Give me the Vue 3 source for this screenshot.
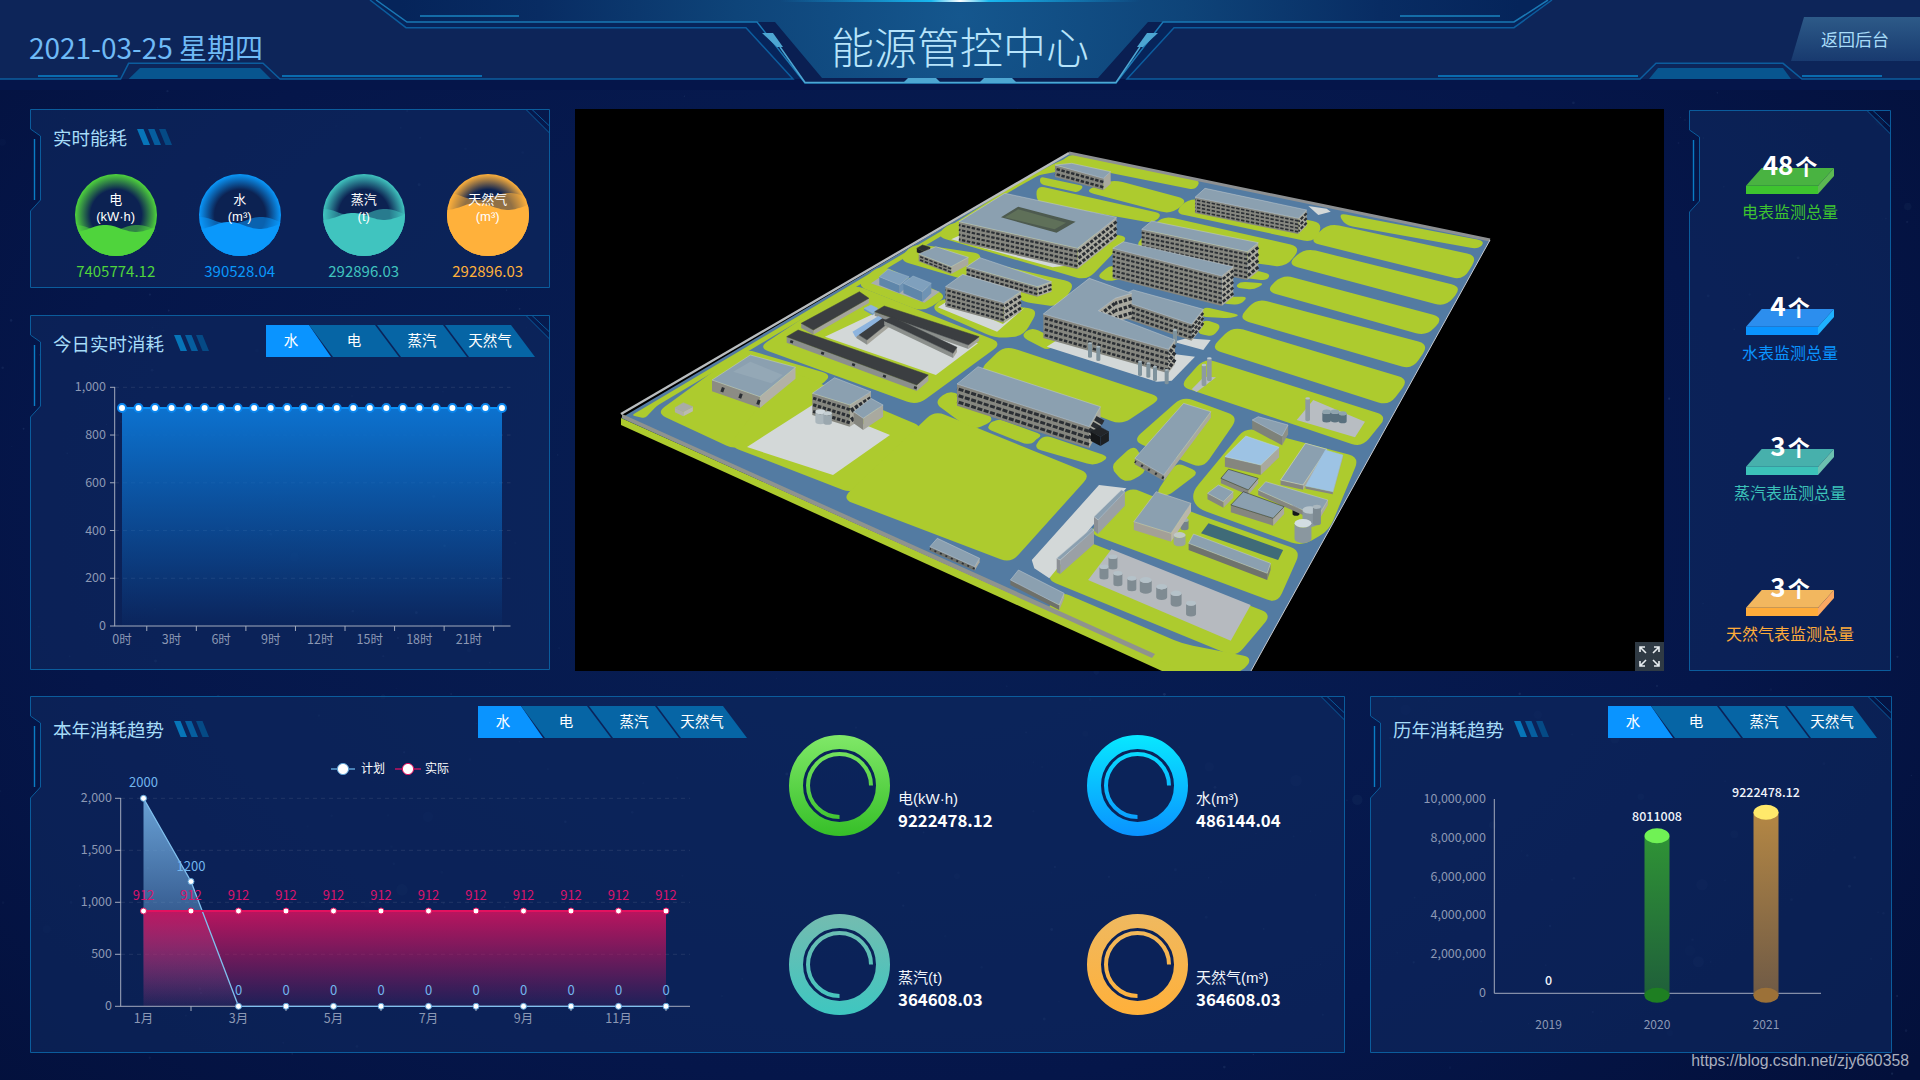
<template>
  <div class="screen">
    <svg class="stars" width="1920" height="1080">
      <circle v-for="(s, i) in stars" :key="i" :cx="s.x" :cy="s.y" :r="s.r" fill="#9fc4f0" :opacity="s.o" />
    </svg>

    <header class="header">
      <svg class="header-art" width="1920" height="90" viewBox="0 0 1920 90">
        <defs>
          <radialGradient id="hdMid" gradientUnits="userSpaceOnUse" cx="960" cy="10" r="560" gradientTransform="translate(0 6) scale(1 .99)">
            <stop offset="0" stop-color="#15578e" />
            <stop offset=".4" stop-color="#0e4479" />
            <stop offset=".75" stop-color="#082c63" />
            <stop offset="1" stop-color="#05245a" />
          </radialGradient>
          <linearGradient id="hdGlow" x1="0" x2="1" y1="0" y2="0">
            <stop offset="0" stop-color="#10a0e0" stop-opacity="0" />
            <stop offset=".42" stop-color="#18b8f0" />
            <stop offset=".5" stop-color="#ffffff" />
            <stop offset=".58" stop-color="#18b8f0" />
            <stop offset="1" stop-color="#10a0e0" stop-opacity="0" />
          </linearGradient>
        </defs>
        <path d="M0 0H1920V79H0Z" fill="#0d2559" />
        <path d="M370 0L406 27.7H746L793 79H1127L1174 27.7H1514L1552 0Z" fill="#07245a" />
        <path d="M376 0L407 22H757L805 83H1116L1163 22H1514L1548 0Z" fill="url(#hdMid)" />
        <path d="M757 22H775L822 78H1098L1148 22H1163L1116 83H805Z" fill="#0a1f52" />
        <path d="M0 79H801L805 83H1116L1120 79H1920V90H0Z" fill="#05154a" />

        <g fill="none" stroke="#0c5d9e" stroke-width="1.5">
          <path d="M0 79H120.6L128.6 63.3H263L280 79H793L746 27.7H406L370 0" />
          <path d="M1920 79H1802L1783 63.3H1656L1640 79H1127L1174 27.7H1514L1552 0" />
        </g>
        <path d="M376 0L407 22H757L805 83H1116L1163 22H1514L1548 0" fill="none" stroke="#1a78b4" stroke-width="1.5" />
        <g fill="#08558f">
          <path d="M128.6 79L140 68H260L271 79Z" />
          <path d="M1649 79L1658 68H1783L1791 79Z" />
        </g>
        <g stroke="#0a6cae" stroke-width="2">
          <path d="M38 76H117.6M282 76H482M1438 76H1638M1802 76H1882" />
          <path d="M420 16H519M1400 16H1500" stroke="#1a84c0" stroke-width="1.5" />
        </g>
        <g fill="#4da6d2">
          <path d="M903 83L908 78H936L941 83Z" />
          <path d="M979 83L984 78H1012L1017 83Z" />
          <path d="M762 33H773L783 47H777Z" />
          <path d="M1158 33H1147L1137 47H1143Z" />
        </g>
        <path d="M780 47L805 82.5H1116L1140 47" fill="none" stroke="#4da6d2" stroke-width="1.5" />
        <rect x="780" y="0" width="360" height="2" fill="url(#hdGlow)" />
      </svg>
      <div class="header-row">
        <div class="date">2021-03-25 星期四</div>
        <h1 class="title">能源管控中心</h1>
        <div class="back-wrap"><a class="back">返回后台</a></div>
      </div>
    </header>

    <main class="main">
      <div class="left-col">
        <section class="panel panel-live">
          <svg class="frame" width="520" height="179"><path class="frame-fill" :d="fill(520, 179)" /><path class="frame-line" :d="line(520, 179)" /><path class="frame-glow" d="M4.5 30V91" /></svg>
          <div class="panel-head"><h2 class="panel-title">实时能耗<i class="bars"><b></b><b></b><b></b></i></h2></div>
          <div class="orbs">
            <div v-for="o in orbs" :key="o.id" class="orb-cell">
              <div class="orb">
                <svg width="82" height="82">
                  <defs>
                    <radialGradient :id="'g' + o.id" cx=".5" cy=".5" r=".5">
                      <stop offset=".62" stop-color="#0c2252" />
                      <stop offset="1" :stop-color="o.color" />
                    </radialGradient>
                    <clipPath :id="'c' + o.id"><circle cx="41" cy="41" r="41" /></clipPath>
                  </defs>
                  <circle cx="41" cy="41" r="41" :fill="'url(#g' + o.id + ')'" />
                  <g :clip-path="'url(#c' + o.id + ')'" :fill="o.color">
                    <path :d="wave(o.back, 0)" opacity=".55" />
                    <path :d="wave(o.front, 30)" />
                  </g>
                </svg>
                <div class="orb-text">{{ o.name }}<br />{{ o.unit }}</div>
              </div>
              <div class="orb-value" :style="{ color: o.color }">{{ o.value }}</div>
            </div>
          </div>
        </section>

        <section class="panel panel-today">
          <svg class="frame" width="520" height="355"><path class="frame-fill" :d="fill(520, 355)" /><path class="frame-line" :d="line(520, 355)" /><path class="frame-glow" d="M4.5 30V91" /></svg>
          <div class="panel-head">
            <h2 class="panel-title">今日实时消耗<i class="bars"><b></b><b></b><b></b></i></h2>
            <div class="tabs"><span v-for="(t, i) in tabs" :key="t" class="tab" :class="{ on: i === 0 }">{{ t }}</span></div>
          </div>
          <svg class="chart" width="520" height="295" viewBox="30 375 520 295">
            <defs>
              <linearGradient id="todayArea" x1="0" x2="0" y1="0" y2="1">
                <stop offset="0" stop-color="#0c72cf" />
                <stop offset="1" stop-color="#0c72cf" stop-opacity=".03" />
              </linearGradient>
            </defs>
            <g v-for="t in todayY" :key="t.label">
              <line v-if="t.v" x1="115" :x2="510.5" :y1="t.y" :y2="t.y" class="grid" />
              <line x1="110" x2="115" :y1="t.y" :y2="t.y" class="axis" />
              <text x="106" :y="t.y + 4" text-anchor="end" class="tick">{{ t.label }}</text>
            </g>
            <rect x="122" y="408" width="380" height="218" fill="url(#todayArea)" />
            <path d="M122 408H502" stroke="#0a90f5" stroke-width="2" />
            <path d="M114.7 387V626H510.5" class="axis" fill="none" />
            <line v-for="x in todayTicks" :key="x" :x1="x" :x2="x" y1="626" y2="631" class="axis" />
            <g v-for="x in todayPts" :key="x">
              <circle :cx="x" cy="408" r="4" fill="#fff" stroke="#0a86ee" stroke-width="2" />
            </g>
            <text v-for="l in todayX" :key="l.t" :x="l.x" y="644" text-anchor="middle" class="tick">{{ l.t }}</text>
          </svg>
        </section>
      </div>

      <section class="scene">
        <svg width="1089" height="562">
          <path v-for="(p, i) in scene" :key="i" :d="p.d" :fill="p.fill || 'none'" :stroke="p.stroke" :stroke-width="p.sw" :stroke-dasharray="p.dash" />
        </svg>
        <button class="full" aria-label="全屏">
          <svg width="29" height="29" viewBox="0 0 29 29" fill="none" stroke="#e8edf0" stroke-width="1.6">
            <path d="M5 10V5H10M5 5L11 11M24 10V5H19M24 5L18 11M5 19V24H10M5 24L11 18M24 19V24H19M24 24L18 18" />
          </svg>
        </button>
      </section>

      <section class="panel panel-stats">
        <svg class="frame" width="202" height="561"><path class="frame-fill" :d="fill(202, 561)" /><path class="frame-line" :d="line(202, 561)" /><path class="frame-glow" d="M4.5 30V91" /></svg>
        <div v-for="s in stats" :key="s.label" class="stat">
          <div class="stat-num">{{ s.num }}<span>个</span></div>
          <svg class="stat-box" width="88" height="26">
            <path d="M0 17.7L15.7 0H88L72 17.7Z" :fill="s.top" />
            <path d="M0 17.7H72V26H0Z" :fill="s.color" />
            <path d="M72 17.7L88 0V8L72 26Z" :fill="s.side" />
          </svg>
          <div class="stat-label" :style="{ color: s.color }">{{ s.label }}</div>
        </div>
      </section>
    </main>

    <div class="bottom">
      <section class="panel panel-year">
        <svg class="frame" width="1315" height="357"><path class="frame-fill" :d="fill(1315, 357)" /><path class="frame-line" :d="line(1315, 357)" /><path class="frame-glow" d="M4.5 30V91" /></svg>
        <div class="year-left">
          <div class="panel-head low">
            <h2 class="panel-title">本年消耗趋势<i class="bars"><b></b><b></b><b></b></i></h2>
            <div class="tabs"><span v-for="(t, i) in tabs" :key="t" class="tab" :class="{ on: i === 0 }">{{ t }}</span></div>
          </div>
          <svg class="chart" width="730" height="297" viewBox="30 756 730 297">
            <defs>
              <linearGradient id="planArea" gradientUnits="userSpaceOnUse" x1="0" x2="0" y1="798" y2="1006">
                <stop offset="0" stop-color="#6ea8dc" stop-opacity=".95" />
                <stop offset="1" stop-color="#6ea8dc" stop-opacity=".03" />
              </linearGradient>
              <linearGradient id="realArea" x1="0" x2="0" y1="0" y2="1">
                <stop offset="0" stop-color="#c2145f" stop-opacity=".95" />
                <stop offset="1" stop-color="#c2145f" stop-opacity=".1" />
              </linearGradient>
            </defs>
            <g v-for="t in yearY" :key="t.label">
              <line v-if="t.v" x1="121" x2="690" :y1="t.y" :y2="t.y" class="grid" />
              <line x1="115" x2="121" :y1="t.y" :y2="t.y" class="axis" />
              <text x="112" :y="t.y + 4" text-anchor="end" class="tick">{{ t.label }}</text>
            </g>
            <path :d="planArea" fill="url(#planArea)" />
            <rect x="143.5" y="911" width="522.5" height="95.3" fill="url(#realArea)" />
            <path d="M120.7 798V1006.3H690" class="axis" fill="none" />
            <line v-for="(m, i) in yearPts" v-show="i % 2" :key="m.x" :x1="m.x" :x2="m.x" y1="1006" y2="1011" class="axis" />
            <path :d="planLine" fill="none" stroke="#80c0ee" stroke-width="1.3" />
            <path d="M143.5 911H666" stroke="#e3115f" stroke-width="2" />
            <g v-for="m in yearPts" :key="'p' + m.x">
              <circle :cx="m.x" :cy="m.planY" r="3" fill="#fff" stroke="#5ea2d6" />
              <circle :cx="m.x" cy="911" r="3" fill="#fff" stroke="#e3115f" />
              <text :x="m.x" :y="m.planY - 11" text-anchor="middle" class="plan-label">{{ m.plan }}</text>
              <text :x="m.x" y="900" text-anchor="middle" class="real-label">912</text>
              <text v-if="m.month" :x="m.x" y="1023" text-anchor="middle" class="tick">{{ m.month }}</text>
            </g>
            <path d="M331 769H355" stroke="#5ea2d6" stroke-width="1.5" />
            <circle cx="343" cy="769" r="5.6" fill="#fff" stroke="#5ea2d6" />
            <text x="361" y="773" class="legend">计划</text>
            <path d="M395 769H421" stroke="#c2145f" stroke-width="1.5" />
            <circle cx="408" cy="769" r="5.6" fill="#fff" stroke="#e3115f" />
            <text x="425" y="773" class="legend">实际</text>
          </svg>
        </div>
        <div class="metrics">
          <div v-for="m in metrics" :key="m.id" class="metric">
            <svg width="101" height="101">
              <defs>
                <linearGradient :id="'m' + m.id" gradientUnits="userSpaceOnUse" x1="0" x2="0" y1="0" y2="101">
                  <stop offset="0" :stop-color="m.from" />
                  <stop offset="1" :stop-color="m.to" />
                </linearGradient>
              </defs>
              <circle cx="50.5" cy="50.5" r="43.5" fill="none" :stroke="'url(#m' + m.id + ')'" stroke-width="14" />
              <path d="M50.5 82A31.5 31.5 0 1 1 82 50.5" fill="none" :stroke="'url(#m' + m.id + ')'" stroke-width="4" />
            </svg>
            <div class="metric-text">
              <div class="metric-name">{{ m.name }}</div>
              <div class="metric-value">{{ m.value }}</div>
            </div>
          </div>
        </div>
      </section>

      <section class="panel panel-history">
        <svg class="frame" width="522" height="357"><path class="frame-fill" :d="fill(522, 357)" /><path class="frame-line" :d="line(522, 357)" /><path class="frame-glow" d="M4.5 30V91" /></svg>
        <div class="panel-head low">
          <h2 class="panel-title">历年消耗趋势<i class="bars"><b></b><b></b><b></b></i></h2>
          <div class="tabs"><span v-for="(t, i) in tabs" :key="t" class="tab" :class="{ on: i === 0 }">{{ t }}</span></div>
        </div>
        <svg class="chart" width="522" height="297" viewBox="1370 756 522 297">
          <defs>
            <linearGradient id="barG" x1="0" x2="0" y1="0" y2="1">
              <stop offset="0" stop-color="#2f9336" />
              <stop offset="1" stop-color="#1f5f3a" />
            </linearGradient>
            <linearGradient id="barO" x1="0" x2="0" y1="0" y2="1">
              <stop offset="0" stop-color="#b48744" />
              <stop offset="1" stop-color="#6f5a46" />
            </linearGradient>
          </defs>
          <text v-for="(l, i) in historyY" :key="l" x="1486" :y="803 + i * 38.8" text-anchor="end" class="tick">{{ l }}</text>
          <path d="M1494.3 799V993.3H1821" class="axis" fill="none" />
          <rect x="1644.5" y="836" width="25" height="160" fill="url(#barG)" />
          <ellipse cx="1657" cy="995.3" rx="12.5" ry="7.5" fill="#1e7f22" />
          <ellipse cx="1657" cy="835.7" rx="12.5" ry="7.5" fill="#70f255" />
          <rect x="1753.5" y="812" width="25" height="184" fill="url(#barO)" />
          <ellipse cx="1766" cy="995.3" rx="12.5" ry="7.5" fill="#9c7138" />
          <ellipse cx="1766" cy="812.3" rx="12.5" ry="7.5" fill="#ffe96b" />
          <text x="1548.6" y="985" text-anchor="middle" class="bar-label">0</text>
          <text x="1657" y="821" text-anchor="middle" class="bar-label">8011008</text>
          <text x="1766" y="797" text-anchor="middle" class="bar-label">9222478.12</text>
          <text x="1548.6" y="1029" text-anchor="middle" class="tick small">2019</text>
          <text x="1657" y="1029" text-anchor="middle" class="tick small">2020</text>
          <text x="1766" y="1029" text-anchor="middle" class="tick small">2021</text>
        </svg>
      </section>
    </div>

    <div class="watermark">https://blog.csdn.net/zjy660358</div>
  </div>
</template>

<script setup>
const tabs = ['水', '电', '蒸汽', '天然气']

// panel outline: notch on the left, clipped corner on the right
const outline = 'V102L10.5 91V27L.5 20Z'
const fill = (w, h) => `M.5 .5H${w - 24}L${w - .5} 24V${h - .5}H.5${outline}`
const line = (w, h) => `M.5 .5H${w - .5}V${h - .5}H.5${outline}M${w - 24} .5L${w - .5} 24M${w - 18} .5L${w - .5} 17`

let seed = 7
const rnd = () => (seed = (seed * 16807) % 2147483647) / 2147483647
const stars = Array.from({ length: 420 }, () => {
  const big = rnd() > .88
  return {
    x: rnd() * 1920,
    y: rnd() * 1080,
    r: big ? 2 + rnd() * 4 : .5 + rnd(),
    o: big ? .02 + rnd() * .03 : .03 + rnd() * .09,
  }
})

const orbs = [
  { id: 'e', name: '电', unit: '(kW·h)', value: '7405774.12', color: '#4fd43c', front: 51, back: 51 },
  { id: 'w', name: '水', unit: '(m³)', value: '390528.04', color: '#0a98fb', front: 48, back: 43 },
  { id: 's', name: '蒸汽', unit: '(t)', value: '292896.03', color: '#40c4bf', front: 39, back: 35 },
  { id: 'g', name: '天然气', unit: '(m³)', value: '292896.03', color: '#ffb13b', front: 29, back: 19 },
]

function wave(level, crest) {
  let d = `M0 82`
  for (let x = 0; x <= 82; x += 2) {
    const y = level + 3.5 * (1 - Math.cos((2 * Math.PI * (x - crest)) / 62))
    d += `L${x} ${y.toFixed(1)}`
  }
  return d + 'L82 82Z'
}

const todayY = [0, 200, 400, 600, 800, 1000].map((v) => ({
  v,
  y: 626 - v * 0.2387,
  label: v.toLocaleString('en-US'),
}))
const todayPts = Array.from({ length: 24 }, (_, i) => 122 + i * 16.52)
const todayTicks = Array.from({ length: 8 }, (_, i) => 122 + 16.52 * (1.5 + i * 3))
const todayX = Array.from({ length: 8 }, (_, i) => ({ x: 122 + i * 49.56, t: i * 3 + '时' }))

const yearY = [0, 500, 1000, 1500, 2000].map((v) => ({
  v,
  y: 1006.3 - v * 0.104,
  label: v.toLocaleString('en-US'),
}))
const planVals = [2000, 1200, 0, 0, 0, 0, 0, 0, 0, 0, 0, 0]
const yearPts = planVals.map((plan, i) => ({
  x: 143.5 + i * 47.5,
  plan,
  planY: 1006.3 - plan * 0.104,
  month: i % 2 ? '' : i + 1 + '月',
}))
const planLine = 'M' + yearPts.map((p) => `${p.x} ${p.planY}`).join('L')
const planArea = planLine + 'L666 1006.3H143.5Z'

const historyY = ['10,000,000', '8,000,000', '6,000,000', '4,000,000', '2,000,000', '0']

const metrics = [
  { id: 'e', name: '电(kW·h)', value: '9222478.12', from: '#80e868', to: '#36bf28' },
  { id: 'w', name: '水(m³)', value: '486144.04', from: '#08e8ff', to: '#0a92ff' },
  { id: 's', name: '蒸汽(t)', value: '364608.03', from: '#74bcb0', to: '#3ec6c0' },
  { id: 'g', name: '天然气(m³)', value: '364608.03', from: '#efb960', to: '#ffb03a' },
]

const stats = [
  { num: 48, label: '电表监测总量', color: '#3ec42f', top: '#49b341', side: '#5cb852' },
  { num: 4, label: '水表监测总量', color: '#0a94ff', top: '#2c8eee', side: '#1fb1ff' },
  { num: 3, label: '蒸汽表监测总量', color: '#3cc2b9', top: '#47b0ac', side: '#6cc0b0' },
  { num: 3, label: '天然气表监测总量', color: '#ffac3a', top: '#f2b75f', side: '#fba862' },
]

// --- plant scene. Coordinates are read in three reference crops, then moved to scene space.
const FRAMES = {
  A: [580, 110, 2.613, 3],
  B: [900, 360, 2.01, 3],
  C: [1040, 150, 3, 3],
  F: [0, 0, 1, 1],
}
const at = (f, flat) => {
  const [ox, oy, sx, sy] = FRAMES[f]
  const out = []
  for (let i = 0; i < flat.length; i += 2) out.push([ox + flat[i] / sx - 575, oy + flat[i + 1] / sy - 109])
  return out
}
const polyD = (pts) => 'M' + pts.map((p) => `${p[0].toFixed(1)} ${p[1].toFixed(1)}`).join('L') + 'Z'
function roundD(pts, r) {
  let d = ''
  pts.forEach((p, i) => {
    const a = pts[(i + pts.length - 1) % pts.length]
    const b = pts[(i + 1) % pts.length]
    const cut = (q) => {
      const len = Math.hypot(q[0] - p[0], q[1] - p[1])
      const k = Math.min(r, len / 2) / len
      return [p[0] + (q[0] - p[0]) * k, p[1] + (q[1] - p[1]) * k]
    }
    const s = cut(a)
    const e = cut(b)
    d += `${i ? 'L' : 'M'}${s[0].toFixed(1)} ${s[1].toFixed(1)}Q${p[0].toFixed(1)} ${p[1].toFixed(1)} ${e[0].toFixed(1)} ${e[1].toFixed(1)}`
  })
  return d + 'Z'
}
// corners were read on the rounded outline, so push them back out
function grow(pts, by) {
  const cx = pts.reduce((s, p) => s + p[0], 0) / pts.length
  const cy = pts.reduce((s, p) => s + p[1], 0) / pts.length
  return pts.map((p) => {
    const len = Math.hypot(p[0] - cx, p[1] - cy) || 1
    return [p[0] + ((p[0] - cx) / len) * by, p[1] + ((p[1] - cy) / len) * by]
  })
}

const GRASS = '#adcb2e'
const ROAD = '#537ba2'
const CONCRETE = '#d3d8d8'
const ROOF = '#8ba0b0'
const BLUE_ROOF = '#9dc3e4'
const DARK_ROOF = '#3b3e41'

const grassBlocks = [
  ['C', [905, 192, 1325, 272, 1305, 295, 925, 226], 8],
  ['C', [885, 228, 1292, 316, 1250, 382, 828, 278], 16],
  ['C', [815, 302, 1245, 408, 1198, 462, 762, 346], 16],
  ['C', [748, 382, 1190, 500, 1140, 550, 697, 426], 16],
  ['C', [672, 455, 1143, 580, 1095, 648, 618, 510], 18],
  ['C', [600, 540, 1083, 685, 1025, 756, 535, 600], 18],
  ['C', [515, 636, 1018, 795, 945, 880, 442, 712], 18],
  ['C', [90, 12, 482, 93, 465, 120, 60, 38], 6],
  ['C', [232, 98, 428, 148, 378, 184, 150, 125], 14],
  ['C', [0, 80, 132, 108, 115, 128, 0, 102], 4],
  ['C', [0, 110, 358, 190, 330, 216, 0, 158], 8],
  ['C', [465, 150, 832, 218, 805, 272, 420, 190], 14],
  ['C', [385, 205, 765, 290, 720, 346, 300, 290], 14],
  ['C', [640, 360, 692, 372, 680, 392, 600, 382], 6],
  ['C', [600, 395, 675, 400, 640, 420, 585, 412], 6],
  ['C', [560, 440, 625, 440, 600, 465, 545, 460], 6],
  ['C', [490, 470, 602, 495, 570, 505, 480, 500], 6],
  ['C', [490, 508, 545, 525, 520, 560, 470, 550], 6],
  ['C', [210, 345, 310, 370, 205, 395, 170, 380], 6],
  ['C', [135, 345, 170, 350, 135, 390, 80, 350], 6],
  ['C', [0, 380, 90, 395, 55, 460, 0, 435], 6],
  ['A', [1125, 718, 1503, 860, 1400, 932, 1060, 785], 16],
  ['A', [135, 916, 985, 335, 1135, 225, 1240, 160, 1275, 143, 1305, 172, 1200, 195, 1115, 250, 985, 350, 200, 888, 170, 925], 3],
  ['A', [430, 735, 645, 800, 410, 1002, 215, 905], 14],
  ['A', [725, 545, 1082, 700, 870, 865, 487, 712], 18],
  ['F', [790, 375, 918, 428, 850, 488, 735, 445], 14],
  ['A', [795, 478, 945, 555, 885, 592, 738, 528], 14],
  ['A', [885, 410, 1040, 435, 1000, 500, 848, 450], 14],
  ['A', [985, 340, 1420, 380, 1310, 502, 945, 380], 14],
  ['A', [960, 570, 1185, 600, 1145, 672, 1080, 670, 930, 600], 12],
  ['A', [1010, 445, 1282, 520, 1240, 582, 1160, 560], 12],
  ['A', [1185, 660, 1240, 690, 1220, 715, 1160, 680], 8],
  ['A', [975, 850, 1075, 925, 1020, 950, 935, 880], 10],
  ['A', [1090, 925, 1210, 975, 1170, 1005, 1060, 955], 6],
  ['F', [938, 418, 1083, 475, 1007, 556, 850, 498], 18],
  ['B', [110, 105, 180, 170, 140, 195, 80, 130], 8],
  ['B', [185, 180, 280, 225, 265, 255, 175, 205], 6],
  ['B', [295, 230, 415, 290, 385, 312, 275, 265], 8],
  ['B', [570, 125, 670, 175, 605, 310, 478, 240], 12],
  ['B', [470, 265, 490, 330, 455, 358, 430, 320], 10],
  ['B', [555, 318, 595, 340, 540, 400, 520, 395], 8],
  ['B', [700, 222, 910, 300, 850, 500, 800, 540, 610, 440, 600, 400], 16],
  ['B', [470, 390, 600, 480, 795, 570, 750, 720, 390, 520], 12],
  ['B', [385, 555, 735, 760, 665, 880, 305, 660], 14],
  ['B', [330, 700, 560, 850, 700, 890, 680, 932, 570, 932, 300, 760], 10],
]

const base = []
const items = []

function poly(f, flat, color, z) {
  const pts = at(f, flat)
  items.push({ z: z ?? Math.max(...pts.map((p) => p[1])), d: polyD(pts), fill: color })
}

function box(f, flat, h, opts = {}) {
  const pts = at(f, flat)
  const H = h / FRAMES[f][3]
  const z = opts.z ?? Math.max(...pts.map((p) => p[1]))
  const rows = opts.rows ?? 0
  pts.forEach((p, i) => {
    const q = pts[(i + 1) % pts.length]
    const dx = q[0] - p[0]
    const dy = q[1] - p[1]
    if (dx >= 0) return
    const lit = dy > 0
    const wall = polyD([p, q, [q[0], q[1] + H], [p[0], p[1] + H]])
    items.push({ z, d: wall, fill: lit ? opts.side || '#a9a99f' : opts.front || '#85867f' })
    if (rows && (!lit || opts.sideRows)) {
      const count = lit ? opts.sideRows : rows
      for (let k = 0; k < count; k++) {
        const off = (H * (k + 0.7)) / (count + 0.3)
        items.push({
          z,
          d: `M${p[0].toFixed(1)} ${(p[1] + off).toFixed(1)}L${q[0].toFixed(1)} ${(q[1] + off).toFixed(1)}`,
          stroke: '#2a2e33',
          sw: Math.max(1, (H / count) * 0.42),
          dash: opts.dash || '3.4 1.6',
        })
      }
    }
  })
  items.push({ z, d: polyD(pts), fill: opts.roof || ROOF, stroke: opts.rim || '#c4ccd0', sw: 0.5 })
}

function cyl(f, x, y, w, h, color, top) {
  const [[cx, cy]] = at(f, [x, y])
  const r = w / 2 / FRAMES[f][2]
  const H = h / FRAMES[f][3]
  const ry = r * 0.5
  const z = cy + H
  items.push({ z, d: `M${cx - r} ${cy}A${r} ${ry} 0 0 0 ${cx + r} ${cy}V${cy + H}A${r} ${ry} 0 0 1 ${cx - r} ${cy + H}Z`, fill: color })
  items.push({ z, d: `M${cx - r} ${cy}A${r} ${ry} 0 1 1 ${cx + r} ${cy}A${r} ${ry} 0 1 1 ${cx - r} ${cy}Z`, fill: top || '#b9c6cf' })
}

// flat ground pieces
poly('C', [20, 590, 55, 568, 465, 620, 395, 692, 350, 695], CONCRETE, 0)
poly('C', [400, 575, 440, 565, 512, 570, 490, 600], CONCRETE, 0)
poly('C', [770, 810, 820, 750, 975, 815, 945, 862], '#b8bdc2', 0)
poly('C', [455, 718, 492, 680, 528, 682, 470, 726], '#b8bdc2', 0)
poly('F', [747, 447, 814, 404, 890, 435, 833, 475], CONCRETE, 0)
poly('A', [640, 680, 770, 610, 1040, 700, 930, 795], CONCRETE, 0)
poly('A', [935, 592, 962, 572, 1105, 642, 1165, 590, 1090, 665], CONCRETE, 0)
poly('A', [970, 388, 1000, 372, 1310, 462, 1235, 472], CONCRETE, 0)
poly('B', [265, 600, 400, 375, 455, 385, 385, 500, 300, 655, 270, 625], CONCRETE, 0)
poly('B', [378, 660, 425, 568, 705, 735, 665, 842], '#b6babf', 0)
poly('B', [605, 520, 620, 490, 770, 570, 760, 600], '#3f6b78', 0)
poly('A', [760, 520, 800, 490, 940, 545, 900, 578], '#a8adb0', 0)
poly('C', [805, 168, 860, 176, 872, 185, 835, 195], CONCRETE, 0)

// buildings
box('C', [45, 45, 95, 40, 212, 65, 190, 85], 36, { rows: 2 })
box('C', [465, 142, 495, 115, 800, 180, 775, 205], 47, { rows: 4, sideRows: 3 })
box('C', [305, 238, 335, 213, 655, 278, 622, 305], 85, { rows: 6, sideRows: 4 })
box('C', [218, 295, 250, 275, 580, 350, 545, 378], 90, { rows: 6, sideRows: 5 })
box('C', [225, 445, 280, 420, 490, 478, 455, 522], 50, { rows: 3, sideRows: 3 })
box('C', [10, 492, 148, 385, 275, 430, 225, 445, 175, 482, 405, 570, 385, 598], 72, { rows: 4, sideRows: 3 })
box('A', [990, 335, 1110, 250, 1402, 322, 1300, 415], 62, { rows: 4, sideRows: 3 })
poly('A', [1100, 322, 1145, 290, 1295, 335, 1245, 368], '#4d5a4f', 420)
poly('A', [1110, 322, 1145, 298, 1270, 338, 1240, 358], '#5f7059', 420)
box('A', [885, 432, 930, 410, 1015, 442, 970, 470], 22, { rows: 2 })
box('A', [880, 415, 895, 405, 915, 412, 900, 425], 12, { roof: '#2c2f33', front: '#1c1f22', side: '#26292c', rim: '#2c2f33' })
box('A', [1010, 470, 1045, 443, 1232, 515, 1195, 530], 30, { rows: 2, sideRows: 2 })
box('A', [955, 530, 1000, 493, 1152, 545, 1107, 578], 60, { rows: 4, sideRows: 3 })
const tank = { roof: '#7fa0bd', front: '#5f86aa', side: '#6f93b4', rim: '#9db6cc' }
box('A', [782, 500, 805, 478, 860, 500, 835, 525], 25, tank)
box('A', [845, 520, 870, 498, 918, 520, 895, 545], 30, tank)
const hall = { roof: DARK_ROOF, rim: DARK_ROOF, front: '#8b8f8c', side: '#a4a49c' }
box('A', [578, 640, 730, 545, 755, 565, 610, 660], 14, hall)
box('A', [540, 680, 570, 660, 910, 795, 880, 825], 18, { ...hall, rows: 1, dash: '3 30' })
box('A', [770, 605, 795, 588, 1043, 680, 1015, 705], 12, hall)
box('A', [795, 632, 815, 620, 985, 712, 975, 730], 14, hall)
box('A', [722, 670, 790, 615, 815, 630, 750, 690], 14, hall)
poly('A', [712, 665, 780, 618, 790, 625, 720, 682], '#8db4de', 640)
box('A', [742, 595, 760, 585, 778, 595, 765, 610], 6, { roof: '#8db4de', rim: '#8db4de', front: '#6f95bd', side: '#7aa0c8' })
box('A', [345, 810, 445, 735, 563, 772, 470, 860], 34, { rows: 1, dash: '3 16', front: '#8c8c84', side: '#b2b1a7' })
poly('A', [400, 785, 445, 755, 530, 795, 500, 820], '#94a8b6', 900)
box('A', [248, 893, 270, 878, 295, 890, 270, 905], 14, { roof: '#a9aca6', rim: '#a9aca6', front: '#b0b0a8', side: '#bbbbb2' })
box('A', [607, 850, 665, 803, 760, 845, 705, 885], 65, { rows: 3, sideRows: 2 })
box('A', [715, 905, 760, 865, 792, 885, 740, 925], 35, { sideRows: 0 })
cyl('A', 628, 905, 26, 30, '#aab6bc', '#cfd8dc')
cyl('A', 647, 910, 22, 28, '#9aa7ae', '#c4ced2')
box('A', [985, 822, 1040, 770, 1360, 890, 1330, 950], 65, { rows: 3, sideRows: 1, dash: '5 1.6' })
box('A', [1335, 965, 1358, 950, 1382, 965, 1360, 980], 28, { roof: '#23262a', front: '#15171a', side: '#1d2023', rim: '#23262a', z: 410 })
box('B', [472, 295, 570, 130, 625, 155, 530, 345], 18, { rows: 1, dash: '2 6' })
box('B', [708, 180, 720, 170, 780, 195, 768, 228], 28, { front: '#7e827a', side: '#8d9087' })
box('B', [653, 290, 695, 228, 762, 262, 725, 315], 30, { roof: BLUE_ROOF, rim: '#bdd5ea' })
box('B', [765, 360, 815, 250, 858, 268, 810, 375], 14, { rim: '#dcdfdc' })
box('B', [815, 378, 855, 270, 890, 285, 870, 395], 8, { roof: BLUE_ROOF, rim: BLUE_ROOF })
box('B', [645, 355, 660, 328, 720, 355, 700, 390], 15, { rim: '#222' })
box('B', [618, 400, 640, 375, 670, 395, 650, 425], 18)
box('B', [665, 435, 690, 395, 772, 440, 750, 475], 22, { rim: '#222' })
box('B', [720, 390, 735, 365, 860, 420, 840, 470], 15)
box('B', [470, 485, 515, 395, 585, 430, 545, 520], 25, { rim: '#cfcabe', front: '#a3a097', side: '#bab6ab' })
box('B', [580, 550, 590, 522, 745, 610, 738, 640], 20, { front: '#6f736d', side: '#7e8279' })
box('B', [60, 560, 75, 535, 160, 595, 150, 620], 12, { front: '#6e706a', rows: 1, dash: '2 4' })
box('B', [222, 660, 238, 630, 330, 700, 320, 735], 15, { front: '#6e706a' })
box('B', [390, 470, 445, 390, 452, 395, 398, 480], 42, { front: '#8c9095', side: '#9aa0a5' })
box('B', [315, 595, 385, 505, 390, 510, 322, 600], 42, { front: '#8c9095', side: '#9aa0a5' })
cyl('B', 796, 420, 14, 42, '#15181b', '#2a2e33')
cyl('B', 824, 450, 30, 40, '#8a979f', '#b8c5cc')
cyl('B', 838, 440, 16, 50, '#7d8a92', '#aab7be')
cyl('B', 810, 490, 34, 46, '#8a979f', '#d3dde2')
cyl('B', 562, 525, 24, 25, '#98a29f', '#c0c9c6')
cyl('B', 572, 480, 16, 25, '#74818a', '#9fb0b8')
;[[428, 590, 18], [410, 620, 18], [438, 640, 18], [466, 655, 18], [494, 660, 24], [526, 680, 22], [555, 700, 22], [585, 730, 20]].forEach(([x, y, w]) =>
  cyl('B', x, y, w, 32, '#7f8b92', '#b5c2c9'),
)
cyl('C', 803, 745, 14, 65, '#8d9aa2', '#b6c2ca')
cyl('C', 492, 645, 14, 60, '#8d9aa2', '#b6c2ca')
cyl('C', 508, 625, 14, 65, '#8d9aa2', '#c2cdd4')
cyl('C', 860, 785, 26, 26, '#59707e', '#8fa4ae')
cyl('C', 885, 785, 26, 26, '#59707e', '#8fa4ae')
cyl('C', 908, 790, 24, 24, '#59707e', '#8fa4ae')
;[[150, 580], [175, 590], [300, 635], [325, 640], [345, 650], [380, 660], [405, 540]].forEach(([x, y]) => cyl('C', x, y, 12, 40, '#7e929c', '#aabac2'))

items.sort((a, b) => a.z - b.z)

// ground and edge rims
const ground = at('F', [1069, 153, 1490, 240, 1251, 671, 1184, 671, 621, 418])
base.push({ d: polyD(ground), fill: ROAD })
grassBlocks.forEach(([f, flat, r]) => base.push({ d: roundD(grow(at(f, flat), r > 6 ? r * 0.45 : 0), Math.min(r, 11)), fill: GRASS }))
base.push({ d: polyD(at('F', [621, 418, 1184, 671, 1162, 671, 621, 425])), fill: GRASS })
base.push({ d: polyD(at('F', [622, 414, 1155, 654, 1152, 658, 622, 418])), fill: '#8f938e' })
base.push({ d: `M${46} ${305}L${494} ${44}`, stroke: '#b9bdbf', sw: 2.4 })
base.push({ d: `M${494} ${44}L${915} ${131}`, stroke: '#8d9092', sw: 3 })
base.push({ d: `M${915} ${131}L${676} ${562}`, stroke: '#c6cad0', sw: 1 })

const scene = [...base, ...items]
</script>

<style>
html, body { margin: 0; background: #04123f; }
</style>

<style scoped>
.screen {
  position: relative;
  width: 1920px;
  height: 1080px;
  overflow: hidden;
  color: #fff;
  font-family: "Noto Sans CJK SC", "Liberation Sans", sans-serif;
  background: radial-gradient(ellipse 1300px 900px at 900px 500px, #082055 0%, #05164a 65%, #03103b 100%);
}
.stars { position: absolute; left: 0; top: 0; }

.header { position: relative; height: 109px; }
.header-art { position: absolute; left: 0; top: 0; }
.header-row {
  position: relative;
  display: grid;
  grid-template-columns: 1fr auto 1fr;
  align-items: start;
}
.date {
  padding: 28px 0 0 29px;
  font-size: 28px;
  font-weight: 400;
  line-height: 38px;
  color: #6fbaf6;
}
.title {
  margin: 15px 0 0;
  font-size: 43px;
  font-weight: 300;
  line-height: 60px;
  color: #b7e4fb;
}
.back-wrap { display: flex; justify-content: flex-end; padding-top: 17px; }
.back {
  width: 129px;
  height: 44px;
  padding-left: 30px;
  box-sizing: border-box;
  font-size: 17px;
  font-weight: 400;
  line-height: 44px;
  color: #a8dcf8;
  background: linear-gradient(#2d5a88, #183a6f);
  clip-path: polygon(13px 0, 100% 0, 100% 100%, 0 100%);
}

.main {
  position: relative;
  display: grid;
  grid-template-columns: 520px 1089px 202px;
  gap: 25px;
  height: 562px;
  padding-left: 30px;
}
.left-col { display: flex; flex-direction: column; gap: 27px; }

.panel { position: relative; }
.panel-live { height: 179px; }
.panel-today { height: 355px; }
.panel-stats {
  align-self: end;
  height: 561px;
  padding-top: 42px;
  box-sizing: border-box;
  display: grid;
  grid-auto-rows: 140.5px;
}
.frame { position: absolute; left: 0; top: 0; }
.frame-fill { fill: rgba(15, 42, 96, .6); }
.frame-line { fill: none; stroke: #0b5c9c; stroke-width: 1; }
.frame-glow { fill: none; stroke: #0a7cc4; stroke-width: 1.4; }

.panel-head {
  position: relative;
  display: flex;
  justify-content: space-between;
  height: 60px;
  padding: 11px 15px 0 23px;
  box-sizing: border-box;
}
.panel-title {
  display: flex;
  align-items: center;
  margin: 2px 0 0;
  height: 30px;
  font-size: 18.5px;
  font-weight: 400;
  color: #a6dcf8;
}
.panel-head.low .panel-title { margin-top: 7px; }
.bars { display: flex; margin: 0 0 0 10px; }
.bars b {
  display: block;
  width: 13px;
  height: 16px;
  clip-path: polygon(0 0, 50% 0, 100% 100%, 50% 100%);
  background: #0775b8;
}
.bars b:nth-child(2) { background: #065e9f; margin-left: -2px; }
.bars b:nth-child(3) { background: #054a85; margin-left: -2px; }

.tabs { display: flex; margin-top: -1px; }
.tab {
  display: block;
  width: 90px;
  height: 32px;
  margin-left: -22px;
  font-size: 14.5px;
  line-height: 30px;
  text-align: center;
  color: #fff;
  background: #0665a5;
  clip-path: polygon(0 0, 66px 0, 100% 100%, 24px 100%);
}
.tab.on {
  width: 65px;
  margin-left: 0;
  padding-right: 15px;
  box-sizing: border-box;
  background: #0a94ff;
  clip-path: polygon(0 0, 43px 0, 100% 100%, 0 100%);
}

.orbs {
  position: relative;
  display: grid;
  grid-template-columns: repeat(4, 124px);
  margin: 5px 0 0 23.7px;
}
.orb-cell { display: flex; flex-direction: column; align-items: center; }
.orb { position: relative; width: 82px; height: 82px; }
.orb svg { display: block; }
.orb-text {
  position: absolute;
  left: 0;
  right: 0;
  top: 17px;
  font-family: "Liberation Sans", "Noto Sans CJK SC", sans-serif;
  font-size: 13px;
  line-height: 17px;
  text-align: center;
  color: #fff;
}
.orb-value { margin-top: 5px; font-size: 15px; line-height: 20px; font-weight: 400; }

.chart { position: relative; display: block; }
.grid { stroke: rgba(255, 255, 255, .09); stroke-dasharray: 4 4; }
.axis { stroke: #a3abbd; }
.tick { font-size: 12.5px; fill: #8c98b4; }
.tick.small { font-size: 12px; }
.plan-label { font-size: 13px; fill: #72b6ee; }
.real-label { font-size: 13px; fill: #d8146c; }
.legend { font-size: 12px; fill: #fff; }
.bar-label { font-size: 12.5px; font-weight: 500; fill: #f0f4fa; }

.scene { position: relative; height: 562px; background: #000; overflow: hidden; }
.scene > svg { display: block; }
.full {
  position: absolute;
  right: 0;
  bottom: 0;
  width: 29px;
  height: 29px;
  padding: 0;
  border: 0;
  background: #2f3a44;
}
.full svg { display: block; }

.stat { position: relative; display: flex; flex-direction: column; align-items: center; }
.stat-num {
  position: relative;
  z-index: 1;
  display: flex;
  align-items: baseline;
  gap: 2px;
  font-size: 26px;
  font-weight: 700;
  line-height: 24px;
}
.stat-num span { font-size: 22px; }
.stat-box { display: block; margin-top: -9px; }
.stat-label { margin-top: 6px; font-size: 16px; font-weight: 400; line-height: 22px; }

.bottom {
  position: relative;
  display: grid;
  grid-template-columns: 1315px 522px;
  gap: 25px;
  height: 357px;
  margin-top: 25px;
  padding-left: 30px;
}
.panel-year { display: flex; }
.year-left { position: relative; width: 730px; }
.year-left .panel-head { padding-right: 13px; }
.metrics {
  position: relative;
  display: grid;
  grid-template-columns: repeat(2, 298px);
  grid-auto-rows: 179px;
  margin: 39px 0 0 29px;
}
.metric { display: flex; align-items: flex-end; gap: 8px; height: 101px; }
.metric svg { display: block; flex: none; }
.metric-text { padding-bottom: 5px; }
.metric-name {
  font-family: "Liberation Sans", "Noto Sans CJK SC", sans-serif;
  font-size: 15px;
  line-height: 22px;
  color: #f2f6fb;
}
.metric-value { font-size: 16.8px; font-weight: 700; line-height: 21px; }

.watermark {
  position: absolute;
  right: 11px;
  bottom: 9px;
  font-family: "Liberation Sans", sans-serif;
  font-size: 15.8px;
  line-height: 20px;
  color: #a9afbf;
}
</style>
